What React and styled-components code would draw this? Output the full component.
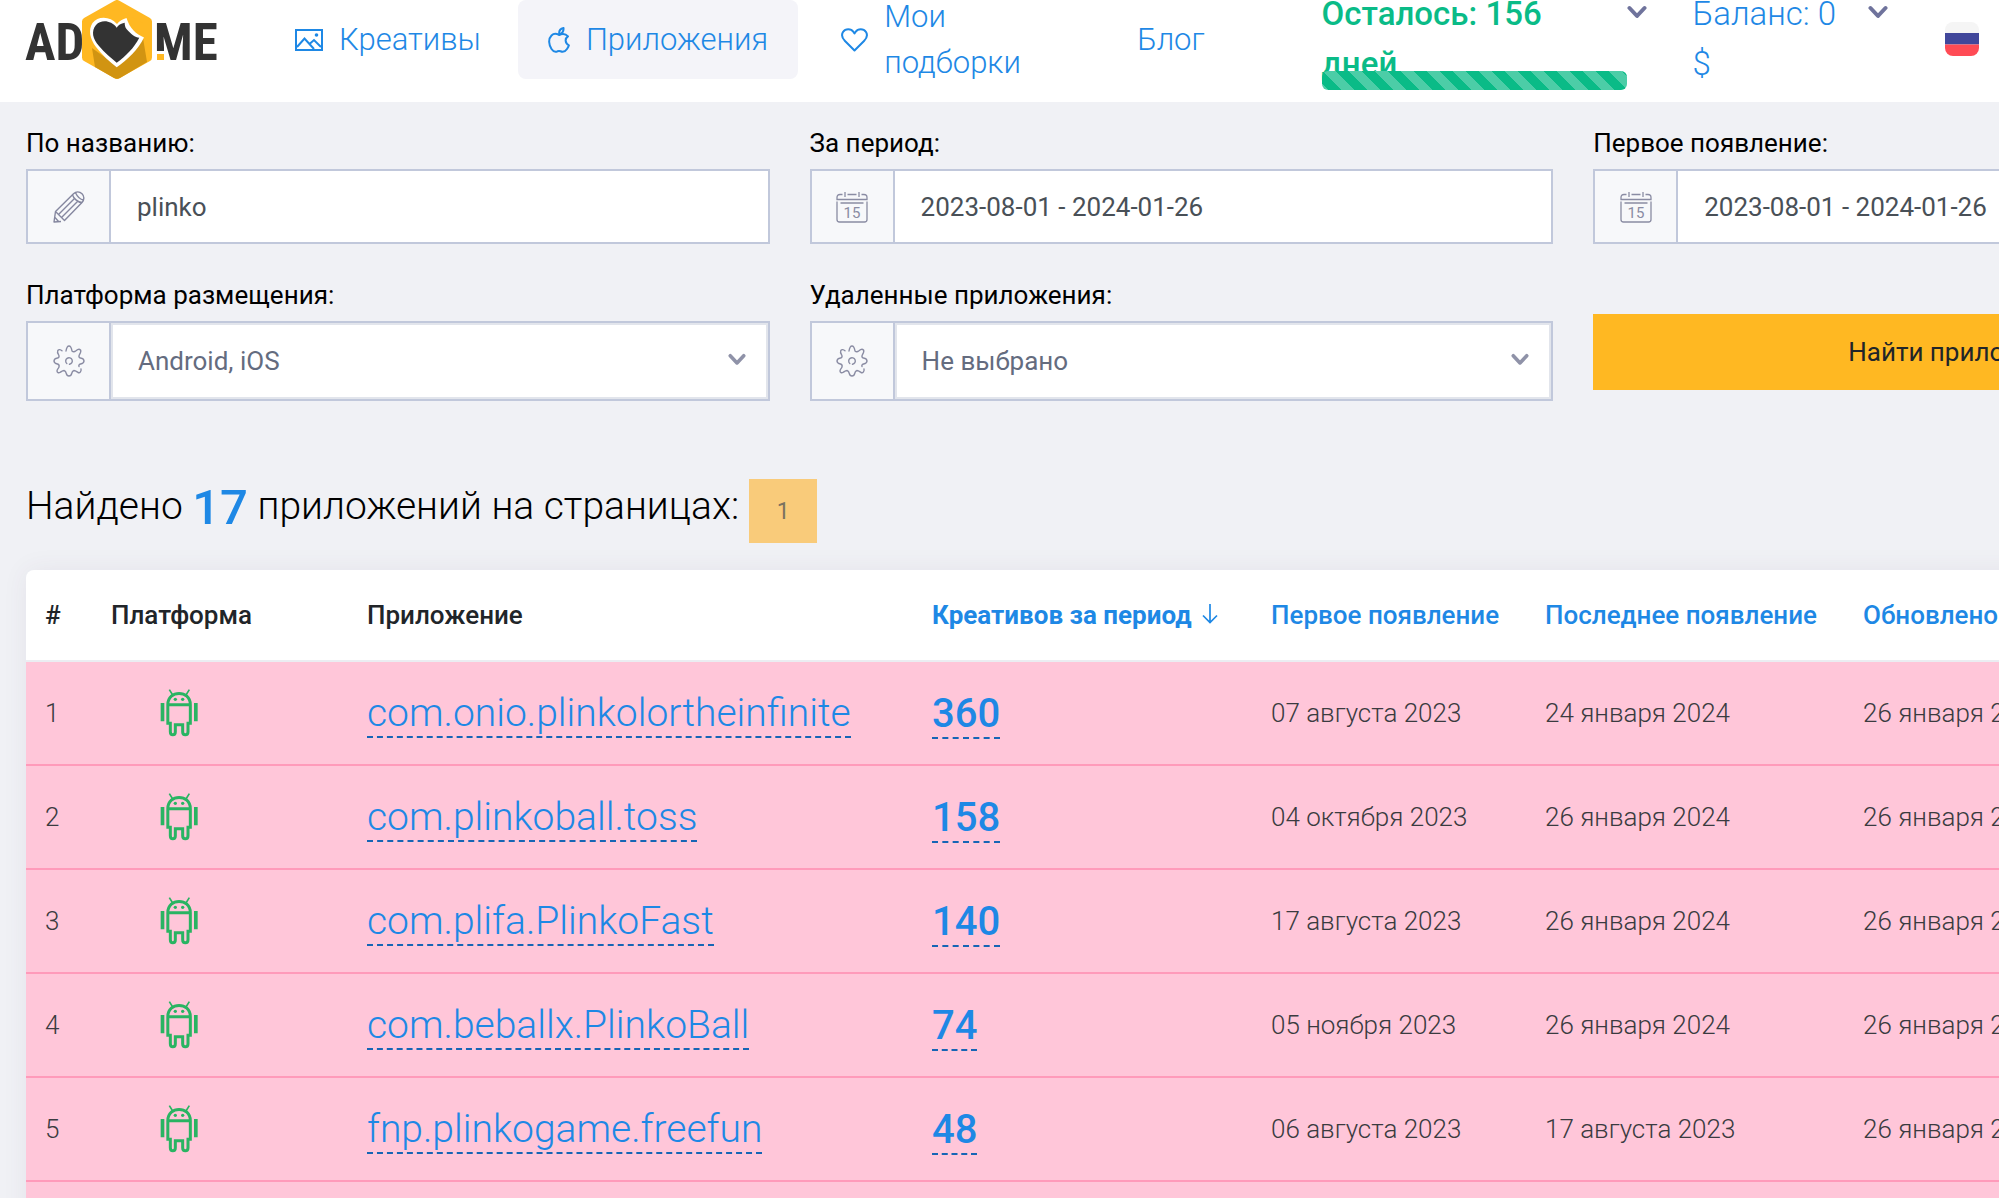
import React, { useState } from 'react';
import styled, { createGlobalStyle, css } from 'styled-components';

const GlobalStyle = createGlobalStyle`
  *, *::before, *::after {
    box-sizing: border-box;
  }
  body {
    margin: 0;
    background: #f0f1f5;
    color: #212529;
    font-family: Roboto, "Liberation Sans", sans-serif;
    font-size: 26px;
    overflow: hidden;
  }
  button, input, select {
    font: inherit;
  }
`;

const Viewport = styled.div`
  height: 100vh;
  overflow: hidden;
`;

/* the layout is wider than the window and runs off to the right */
const Page = styled.div`
  width: 118vw;
`;

const Header = styled.header`
  display: flex;
  align-items: flex-start;
  width: 100vw;
  height: 102px;
  padding-left: 26px;
  background: #fff;
`;

const LogoLink = styled.a`
  display: block;
  width: 192px;
  height: 79px;
  svg {
    display: block;
    overflow: visible;
  }
`;

const Nav = styled.nav`
  display: flex;
  gap: 4px;
  margin-left: 44px;
`;

const NavLink = styled.a`
  display: flex;
  align-items: center;
  gap: 16px;
  height: 79px;
  padding: 0 ${props => props.$pad || 33}px;
  border-radius: 8px;
  color: #1e88e5;
  font-size: 31px;
  font-weight: 300;
  line-height: 46px;
  text-decoration: none;
  background: ${props => (props.$active ? '#f4f4f9' : 'transparent')};
  svg {
    flex: none;
  }
`;

const NavText = styled.span`
  max-width: 150px;
  ${props => props.$wide && css`max-width: none;`}
`;

const Status = styled.div`
  position: relative;
  display: flex;
  align-items: flex-start;
  height: 90px;
  margin-left: ${props => props.$left}px;
  font-size: 33px;
  line-height: 50px;
`;

const StatusText = styled.div`
  width: ${props => props.$width}px;
  height: 78px;
  display: flex;
  align-items: center;
  color: ${props => props.$color};
  font-weight: ${props => props.$weight};
`;

const Progress = styled.div`
  position: absolute;
  left: 0;
  bottom: 0;
  width: 305px;
  height: 19px;
  border-radius: 6px;
  background-color: #0abb87;
  background-image: linear-gradient(
    45deg,
    rgba(255, 255, 255, 0.27) 25%,
    transparent 25%,
    transparent 50%,
    rgba(255, 255, 255, 0.27) 50%,
    rgba(255, 255, 255, 0.27) 75%,
    transparent 75%
  );
  background-size: 26px 26px;
`;

const ToggleButton = styled.button`
  display: flex;
  margin: 5px 0 0;
  padding: 0;
  border: none;
  background: none;
`;

const FlagButton = styled.button`
  display: flex;
  margin: 22px 0 0 57px;
  padding: 0;
  border: none;
  background: none;
`;

const Content = styled.main`
  padding: 24px 22px 0 26px;
`;

const Filters = styled.form`
  display: grid;
  grid-template-columns: repeat(3, 1fr);
  column-gap: 40px;
  row-gap: 34px;
`;

const Field = styled.div`
  min-width: 0;
`;

const Label = styled.label`
  display: block;
  margin-bottom: 9px;
  color: #000;
  line-height: 34px;
`;

const InputGroup = styled.div`
  display: flex;
  height: ${props => props.$height}px;
  border: 2px solid #c1c8db;
  background: #fff;
`;

const Addon = styled.span`
  display: flex;
  align-items: center;
  justify-content: center;
  flex: none;
  width: 83px;
  border-right: 2px solid #c1c8db;
  background: #f7f8fa;
`;

const TextInput = styled.input`
  flex: 1;
  min-width: 0;
  padding: 0 26px;
  border: none;
  outline: none;
  background: transparent;
  color: #495057;
`;

const SelectWrap = styled.div`
  position: relative;
  flex: 1;
  border: 2px solid #e2e5ec;
  svg {
    position: absolute;
    top: 28px;
    right: 20px;
    pointer-events: none;
  }
`;

const Select = styled.select`
  width: 100%;
  height: 100%;
  padding: 0 25px;
  border: none;
  outline: none;
  appearance: none;
  background: transparent;
  color: #646c7f;
`;

const SubmitButton = styled.button`
  height: 76px;
  margin-top: 36px;
  padding: 0;
  border: none;
  background: #ffb822;
  color: #212529;
`;

const Found = styled.div`
  display: flex;
  align-items: center;
  gap: 10px;
  height: 64px;
  margin: 78px 0 27px;
`;

const FoundText = styled.h2`
  display: flex;
  align-items: center;
  margin: 0 0 10px;
  color: #000;
  font-size: 39px;
  font-weight: 300;
  line-height: 52px;
  white-space: pre;
`;

const FoundCount = styled.span`
  margin-top: 4px;
  color: #1e88e5;
  font-size: 49px;
  font-weight: 500;
`;

const PageButton = styled.button`
  width: 68px;
  height: 64px;
  padding: 0;
  border: none;
  background: #f9cb7a;
  color: #7b7260;
  font-size: 23px;
`;

const Card = styled.section`
  border-radius: 8px;
  background: #fff;
  box-shadow: 0 0 26px rgba(82, 63, 105, 0.07);
  overflow: hidden;
`;

const Table = styled.table`
  width: 100%;
  border-collapse: separate;
  border-spacing: 0;
  table-layout: fixed;
`;

const Column = styled.col`
  width: ${props => props.$width}px;
`;

const HeadCell = styled.th`
  height: 92px;
  padding: 0 19px;
  border-bottom: 2px solid #ebedf2;
  font-weight: ${props => (props.$sorted ? 700 : 500)};
  text-align: left;
  white-space: nowrap;
`;

const SortLink = styled.a`
  color: #1e88e5;
  text-decoration: none;
  svg {
    margin-left: 10px;
  }
`;

const Row = styled.tr`
  background: #ffc6d9;
`;

const Cell = styled.td`
  height: 104px;
  padding: 0 19px;
  border-bottom: 2px solid #ff9aba;
  color: #3a3b40;
  font-weight: 300;
  white-space: nowrap;
`;

const PlatformCell = styled(Cell)`
  padding-left: 68px;
  svg {
    display: block;
  }
`;

const DashedLink = styled.a`
  border-bottom: 2px dashed #1665b5;
  color: #1e88e5;
  font-size: 39px;
  font-weight: 300;
  text-decoration: none;
`;

const CountLink = styled(DashedLink)`
  font-size: 40px;
  font-weight: 500;
`;

const apps = [
  { name: 'com.onio.plinkolortheinfinite', creatives: 360, first: '07 августа 2023', last: '24 января 2024', updated: '26 января 2024' },
  { name: 'com.plinkoball.toss', creatives: 158, first: '04 октября 2023', last: '26 января 2024', updated: '26 января 2024' },
  { name: 'com.plifa.PlinkoFast', creatives: 140, first: '17 августа 2023', last: '26 января 2024', updated: '26 января 2024' },
  { name: 'com.beballx.PlinkoBall', creatives: 74, first: '05 ноября 2023', last: '26 января 2024', updated: '26 января 2024' },
  { name: 'fnp.plinkogame.freefun', creatives: 48, first: '06 августа 2023', last: '17 августа 2023', updated: '26 января 2024' },
];

const Logo = () => (
  <svg width="192" height="79" viewBox="0 0 192 79" role="img" aria-label="AD ME">
    <g fill="#333" fontFamily="'Roboto Condensed', 'Liberation Sans Narrow', 'Liberation Sans', sans-serif" fontWeight="700" fontSize="51">
      <text x="-1" y="60">AD</text>
      <text x="128" y="60">ME</text>
    </g>
    <path d="M91 4L122 21.500V57.500L91 75L60 57.500V21.500Z" fill="#ffb822" stroke="#ffb822" strokeWidth="8" strokeLinejoin="round" />
    <path d="M66 48L69 67L88 78Q91 79.500 94 78L121 62L117 38L91 66Z" fill="#d19412" />
    <path d="M91 24C84 16 72 16 66.500 23C62 30 64 39 70 47C76 55 84 62 90.700 67.300C102 59 112 50 118 37.500C110 34 104 29 100.500 18C97 19 93 21 91 24Z" fill="#fff" />
    <path d="M90.700 27.700C85 20 75 19.500 70 25C65 31 66.500 39 73 46C79 53 85 58 90.700 62.700C100 56 108 48 113.300 37.700C109 37.500 105 34 100.700 29.300C99 27 98.700 25 98.700 22.700C95 23.500 92 25 90.700 27.700Z" fill="#333" />
    <path d="M129 51H139V62H129Z" fill="#fff" />
    <path d="M131 54H138V60H131Z" fill="#ffb822" />
  </svg>
);

const ImageIcon = () => (
  <svg width="28" height="22" viewBox="0 0 28 22" fill="none" stroke="#1e88e5" strokeWidth="2">
    <path d="M1 1H27V21H1Z" />
    <path d="M2 18L9.500 9.500L19 20M14.500 15L19 11L26 18" />
    <circle cx="21.500" cy="6" r="1.800" fill="#1e88e5" stroke="none" />
  </svg>
);

const AppleIcon = () => (
  <svg width="22" height="26" viewBox="0 0 22 26" fill="none" stroke="#1e88e5" strokeWidth="2" strokeLinejoin="round">
    <path d="M11 8C8.500 6.500 5.500 6.500 3.500 8.500C0 12 .800 18 3.500 22C5.500 25 7.500 25.200 9.500 24.300C10.500 23.900 11.500 23.900 12.500 24.300C15 25.300 17 25 19 22C20 20.600 20.600 19.400 20.900 18.300C17 16.500 16.500 11.500 20 9.300C17.500 6.500 14 6.500 11 8Z" />
    <path d="M11.200 7.500C10.800 4 12.500 1.500 15.500 1C15.800 4 14.200 6.500 11.200 7.500Z" />
  </svg>
);

const HeartIcon = () => (
  <svg width="27" height="24" viewBox="0 0 27 24" fill="none" stroke="#1e88e5" strokeWidth="2" strokeLinejoin="round">
    <path d="M13.500 22.500L4 13C1 10 .500 6.500 2 4C4.500 .300 10 .300 12.500 4L13.500 5.500L14.500 4C17 .300 22.500 .300 25 4C26.500 6.500 26 10 23 13Z" />
  </svg>
);

const Chevron = ({ size = 20, color = '#6f739c', weight = 4 }) => (
  <svg width={size} height={size * 0.7} viewBox="0 0 20 14" fill="none" stroke={color} strokeWidth={weight} strokeLinecap="round" strokeLinejoin="round">
    <path d="M2.500 3L10 11L17.500 3" />
  </svg>
);

const FlagIcon = () => (
  <svg width="34" height="34" viewBox="0 0 34 34">
    <clipPath id="flag">
      <rect width="34" height="34" rx="8" />
    </clipPath>
    <g clipPath="url(#flag)">
      <path d="M0 0H34V11H0Z" fill="#f5f5f5" />
      <path d="M0 11H34V22.500H0Z" fill="#41479b" />
      <path d="M0 22.500H34V34H0Z" fill="#ff4b55" />
    </g>
  </svg>
);

const PencilIcon = () => (
  <svg width="32" height="32" viewBox="0 0 32 32" fill="none" stroke="#85879f" strokeWidth="1.400" strokeLinejoin="round">
    <path d="M8 30.500L1 31L2.500 20.500L20.500 2.800C23 .400 26.500 .400 29 2.800C31.500 5.200 31.500 9 29 11.500L11.500 29.500L2.500 20.500" />
    <path d="M19.500 4C20.500 7 24.500 11.500 29 11.500M22.500 1.800C24 5 27 8.500 30.500 9M5.500 23.500L21.500 7.500M8.500 26.500L24.500 10.500M2 26.500L5.500 30.500" />
  </svg>
);

const CalendarIcon = () => (
  <svg width="32" height="32" viewBox="0 0 32 32" fill="none" stroke="#8a8ca3" strokeWidth="1.300">
    <path d="M6.500 3.500H4C2 3.500 1 4.500 1 6.500V8.500H31V6.500C31 4.500 30 3.500 28 3.500H25.500M11.500 3.500H20.500M9 1V6M23 1V6" />
    <path d="M1 10.500V28.500C1 30 2 31 3.500 31H28.500C30 31 31 30 31 28.500V10.500M4.500 12H27.500" />
    <text x="16" y="26.500" fontSize="15" fontWeight="400" textAnchor="middle" fill="#8a8ca3" stroke="none">15</text>
  </svg>
);

const GearIcon = () => (
  <svg width="32" height="32" viewBox="0 0 32 32" fill="none" stroke="#8a8ca3" strokeWidth="1.400" strokeLinejoin="round" strokeLinecap="round">
    <path d="M13 6C13.500 3 14 1 16 1S18.500 3 19 6C20.500 7.500 21.500 7 23 5.800C25 4 26.500 4 27.500 5C28.500 6.500 27.500 8 26.300 10C25.500 11.500 26 12.500 27.500 13C30 13.500 31 14.500 31 16S30 18.500 27.500 19C26 19.500 25.500 20.500 26 21.500" />
    <path d="M28 24C28.500 26 27 28.500 25 27.500C23.500 26.500 22.500 25.500 21 25.500C19.500 26 19 27 18.700 28.500C18.300 30.300 17.500 31 16 31S13.700 30.300 13.300 28.500C13 27 12.500 26 11 25.500C9.500 25.500 8.500 26.500 7 27.500C5.500 28.300 4 27.500 4 26C4 24.500 5.500 23.500 6 22C6.500 20.500 6 19.500 4.500 19C2 18.500 1 17.500 1 16S2 13.500 4.500 13C6 12.500 6.500 11.500 5.700 10C4.500 8 4 7 4.800 5.500C6 4 7.500 4.500 9 5.800" />
    <path d="M13.800 18.500A3.300 3.300 0 1 1 16.500 19.300" />
  </svg>
);

const SortArrow = () => (
  <svg width="16" height="20" viewBox="0 0 16 20" fill="none" stroke="#1e88e5" strokeWidth="1.700">
    <path d="M8 0V18M1 11.500L8 18.500L15 11.500" />
  </svg>
);

const AndroidIcon = () => (
  <svg width="38" height="48" viewBox="60 54 114 144" fill="none" stroke="#29b462" strokeWidth="9">
    <path d="M83.500 101V157H91V182C91 194 106 194 106 182V161H128V182C128 194 144 194 144 182V157H151V101C151 56 83.500 56 83.500 101ZM83 101H151" />
    <path d="M88 56L98 72M148 56L138 72" strokeWidth="5" />
    <path d="M62 96H73V151H62ZM162 96H173V151H162Z" fill="#29b462" stroke="none" />
    <circle cx="106" cy="85" r="5" fill="#29b462" stroke="none" />
    <circle cx="128" cy="85" r="5" fill="#29b462" stroke="none" />
  </svg>
);

const TextField = ({ id, label, icon, initial }) => {
  const [value, setValue] = useState(initial);
  return (
    <Field>
      <Label htmlFor={id}>{label}</Label>
      <InputGroup $height={75}>
        <Addon>{icon}</Addon>
        <TextInput id={id} type="text" value={value} onChange={e => setValue(e.target.value)} />
      </InputGroup>
    </Field>
  );
};

const SelectField = ({ id, label, options }) => (
  <Field>
    <Label htmlFor={id}>{label}</Label>
    <InputGroup $height={80}>
      <Addon>
        <GearIcon />
      </Addon>
      <SelectWrap>
        <Select id={id}>
          {options.map(option => (
            <option key={option}>{option}</option>
          ))}
        </Select>
        <Chevron size={18} color="#8f92a8" />
      </SelectWrap>
    </InputGroup>
  </Field>
);

const AppRow = ({ app, index }) => (
  <Row>
    <Cell>{index + 1}</Cell>
    <PlatformCell>
      <AndroidIcon />
    </PlatformCell>
    <Cell>
      <DashedLink href="#">{app.name}</DashedLink>
    </Cell>
    <Cell>
      <CountLink href="#">{app.creatives}</CountLink>
    </Cell>
    <Cell>{app.first}</Cell>
    <Cell>{app.last}</Cell>
    <Cell>{app.updated}</Cell>
  </Row>
);

const App = () => (
  <Viewport>
    <GlobalStyle />
    <Page>
      <Header>
        <LogoLink href="#">
          <Logo />
        </LogoLink>
        <Nav>
          <NavLink href="#">
            <ImageIcon />
            <NavText>Креативы</NavText>
          </NavLink>
          <NavLink href="#" $pad={30} $active>
            <AppleIcon />
            <NavText $wide>Приложения</NavText>
          </NavLink>
          <NavLink href="#" $pad={39}>
            <HeartIcon />
            <NavText>Мои подборки</NavText>
          </NavLink>
          <NavLink href="#" $pad={60}>
            <NavText>Блог</NavText>
          </NavLink>
        </Nav>
        <Status $left={57}>
          <StatusText $width={305} $color="#0abb87" $weight={500}>
            Осталось: 156
            <br />
            дней
          </StatusText>
          <ToggleButton type="button" aria-label="Подписка">
            <Chevron />
          </ToggleButton>
          <Progress />
        </Status>
        <Status $left={46}>
          <StatusText $width={175} $color="#1e88e5" $weight={300}>
            Баланс: 0<br />$
          </StatusText>
          <ToggleButton type="button" aria-label="Баланс">
            <Chevron />
          </ToggleButton>
        </Status>
        <FlagButton type="button" aria-label="Русский">
          <FlagIcon />
        </FlagButton>
      </Header>
      <Content>
        <Filters onSubmit={e => e.preventDefault()}>
          <TextField id="name" label="По названию:" icon={<PencilIcon />} initial="plinko" />
          <TextField id="period" label="За период:" icon={<CalendarIcon />} initial="2023-08-01 - 2024-01-26" />
          <TextField id="first" label="Первое появление:" icon={<CalendarIcon />} initial="2023-08-01 - 2024-01-26" />
          <SelectField id="platform" label="Платформа размещения:" options={['Android, iOS', 'Android', 'iOS']} />
          <SelectField id="deleted" label="Удаленные приложения:" options={['Не выбрано']} />
          <SubmitButton type="submit">Найти приложения</SubmitButton>
        </Filters>
        <Found>
          <FoundText>
            Найдено <FoundCount>17</FoundCount> приложений на страницах:
          </FoundText>
          <PageButton type="button">1</PageButton>
        </Found>
        <Card>
          <Table>
            <colgroup>
              <Column $width={66} />
              <Column $width={256} />
              <Column $width={565} />
              <Column $width={339} />
              <Column $width={274} />
              <Column $width={318} />
              <col />
            </colgroup>
            <thead>
              <tr>
                <HeadCell>#</HeadCell>
                <HeadCell>Платформа</HeadCell>
                <HeadCell>Приложение</HeadCell>
                <HeadCell $sorted>
                  <SortLink href="#">
                    Креативов за период
                    <SortArrow />
                  </SortLink>
                </HeadCell>
                <HeadCell>
                  <SortLink href="#">Первое появление</SortLink>
                </HeadCell>
                <HeadCell>
                  <SortLink href="#">Последнее появление</SortLink>
                </HeadCell>
                <HeadCell>
                  <SortLink href="#">Обновлено</SortLink>
                </HeadCell>
              </tr>
            </thead>
            <tbody>
              {apps.map((app, index) => (
                <AppRow key={app.name} app={app} index={index} />
              ))}
              <Row>
                <Cell colSpan={7} />
              </Row>
            </tbody>
          </Table>
        </Card>
      </Content>
    </Page>
  </Viewport>
);

export default App;
